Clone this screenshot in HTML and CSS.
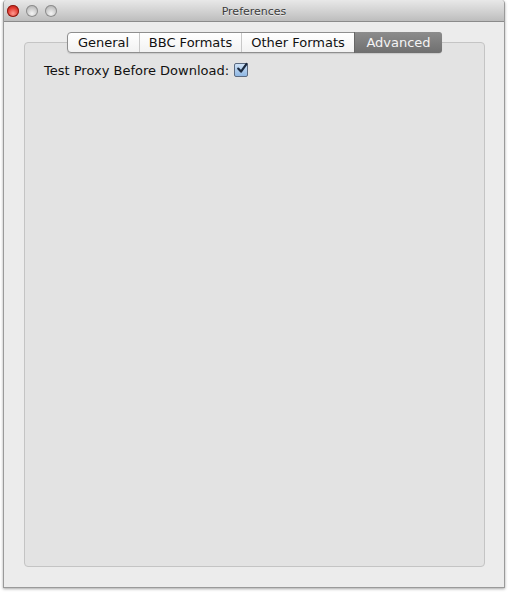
FILE: index.html
```html
<!DOCTYPE html>
<html>
<head>
<meta charset="utf-8">
<link rel="stylesheet" href="styles.css">
</head>
<body>
<div class="window">
  <div class="titlebar">
    <div class="lights">
      <span class="light close"></span>
      <span class="light"></span>
      <span class="light"></span>
    </div>
    <div class="title">Preferences</div>
  </div>
  <div class="content">
    <div class="tabview">
      <div class="tabs">
        <div class="tab first">General</div>
        <div class="tab">BBC Formats</div>
        <div class="tab">Other Formats</div>
        <div class="tab selected last">Advanced</div>
      </div>
      <div class="box">
        <div class="row">
          <span class="label">Test Proxy Before Download:</span>
          <span class="checkbox">
            <svg width="14" height="14" viewBox="0 0 14 14">
              <path d="M3.2 6.6 L6 9.6 L11.6 1.8" fill="none" stroke="#1c2a3f" stroke-width="2.2" stroke-linecap="round" stroke-linejoin="round"/>
            </svg>
          </span>
        </div>
      </div>
    </div>
  </div>
</div>
</body>
</html>
```

FILE: styles.css
```css
html, body {
  margin: 0;
  padding: 0;
  background: #ffffff;
}
body {
  width: 508px;
  height: 592px;
  font-family: "DejaVu Sans", "Liberation Sans", sans-serif;
}
.window {
  margin-left: 3px;
  width: 500px;
  height: 587px;
  background: #ececec;
  border: 1px solid #9a9a9a;
  border-top: none;
  box-shadow: 0 1px 3px rgba(0,0,0,0.35);
  display: flex;
  flex-direction: column;
  border-radius: 4px 4px 0 0;
  overflow: hidden;
}
.titlebar {
  height: 22px;
  flex: none;
  background: linear-gradient(#e8e8e8, #cfcfcf 60%, #bdbdbd);
  border-bottom: 1px solid #8b8b8b;
  display: flex;
  align-items: center;
  position: relative;
  box-sizing: border-box;
  padding-top: 1px;
}
.lights {
  display: flex;
  gap: 7px;
  padding-left: 3px;
}
.light {
  width: 12px;
  height: 12px;
  border-radius: 50%;
  background: radial-gradient(circle at 50% 70%, #f4f4f4, #c2c2c2 60%, #9d9d9d);
  box-shadow: inset 0 0 0 1px #8d8d8d;
}
.light.close {
  background: radial-gradient(circle at 50% 70%, #ff9a90, #e0362c 55%, #a81a12);
  box-shadow: inset 0 0 0 1px #8a1d14;
}
.title {
  position: absolute;
  left: 0;
  right: 0;
  top: 5px;
  text-align: center;
  font-size: 11px;
  color: #3c3c3c;
  text-shadow: 0 1px 0 rgba(255,255,255,0.6);
}
.content {
  flex: 1;
  padding: 10px 19px 20px 20px;
  display: flex;
  flex-direction: column;
}
.tabview {
  flex: 1;
  display: flex;
  flex-direction: column;
  position: relative;
}
.tabs {
  display: flex;
  align-self: center;
  height: 21px;
  box-sizing: border-box;
  border: 1px solid #8e8e8e;
  border-radius: 4px;
  background: linear-gradient(#ffffff, #f2f2f2);
  position: relative;
  z-index: 2;
  margin-bottom: -11px;
  box-shadow: 0 1px 1px rgba(0,0,0,0.12);
}
.tab {
  font-size: 13px;
  color: #111;
  line-height: 19px;
  text-align: center;
  border-left: 1px solid #c8c8c8;
}
.tab:nth-child(1) { width: 71px; border-left: none; }
.tab:nth-child(2) { width: 101px; }
.tab:nth-child(3) { width: 112px; }
.tab:nth-child(4) { width: 87px; }
.tab.selected {
  background: linear-gradient(#8c8c8c, #6f6f6f);
  color: #f4f4f4;
  border-left: 1px solid #666;
  border-radius: 0 3px 3px 0;
  margin: -1px -1px -1px 0;
  height: 21px;
  line-height: 21px;
}
.box {
  flex: 1;
  background: #e3e3e3;
  border: 1px solid #c4c4c4;
  border-radius: 4px;
  padding: 20px 20px 0 19px;
}
.row {
  display: flex;
  align-items: center;
  gap: 5px;
}
.label {
  font-size: 13px;
  color: #111;
}
.checkbox {
  width: 14px;
  height: 14px;
  box-sizing: border-box;
  border: 1px solid #5b6a80;
  border-radius: 2px;
  background: linear-gradient(#cfe2f6, #8fb7e3);
  display: flex;
  align-items: center;
  justify-content: center;
  position: relative;
  margin-top: -2px;
}
.checkbox svg {
  position: absolute;
  left: 0;
  top: -2px;
}
```
